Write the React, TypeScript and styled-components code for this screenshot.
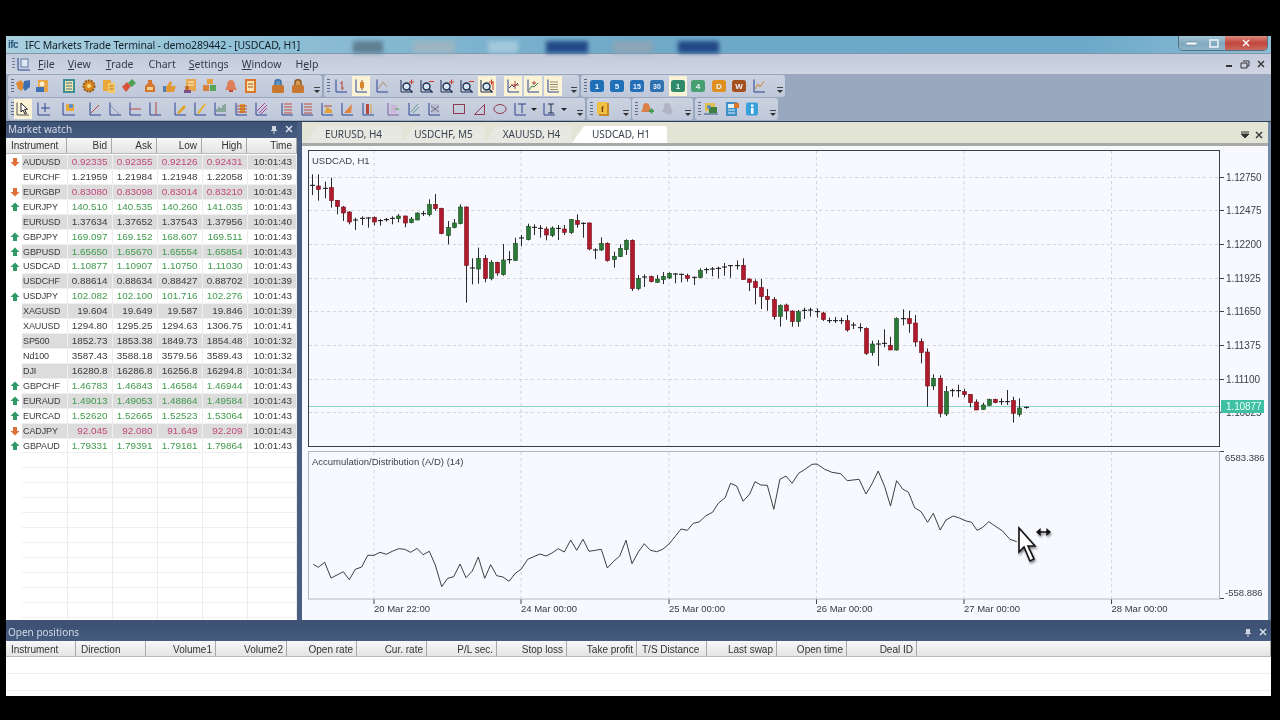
import React, { ReactNode } from "react";
import styled, { createGlobalStyle } from "styled-components";

const GlobalStyle = createGlobalStyle`
  html, body { margin: 0; padding: 0; background: #000; height: 100%; overflow: hidden; }
  * { box-sizing: border-box; }
`;

const FONT = `"Noto Sans", "Liberation Sans", sans-serif`;
const NUM = `"Liberation Sans", Arial, sans-serif`;

const Page = styled.div`
  width: 1280px;
  height: 720px;
  background: #000;
  padding: 36px 9px 24px 6px;
`;

const Win = styled.div`
  position: relative;
  width: 1265px;
  height: 660px;
  display: flex;
  flex-direction: column;
  background: #3f5273;
  font-family: ${FONT};
  font-size: 11px;
  color: #222;
  overflow: hidden;
  filter: blur(0.35px);
`;

/* ---- title bar ---- */
const TitleBar = styled.div`
  height: 18px;
  display: flex;
  align-items: center;
  flex: none;
  padding-left: 2px;
  background: linear-gradient(90deg, #a9cfdf 0%, #8fc0d6 20%, #6ea9c8 50%, #6ba8c9 85%, #8fbfd5 100%);
  border-bottom: 1px solid #7f97a8;
`;
const Logo = styled.span`
  width: 15px;
  color: #27577a;
  font: bold 10px ${NUM};
  letter-spacing: -0.5px;
`;
const TitleText = styled.span`
  margin-left: 2px;
  width: 320px;
  white-space: nowrap;
  font-size: 10.5px;
  letter-spacing: -0.18px;
  color: #15202a;
`;
const Blob = styled.span<{ $w: number; $gap: number; $c: string }>`
  width: ${(p) => p.$w}px;
  height: 12px;
  margin-left: ${(p) => p.$gap}px;
  margin-top: 5px;
  background: ${(p) => p.$c};
  filter: blur(2px);
`;
const WinButtons = styled.div`
  display: flex;
  margin-left: auto;
  margin-right: 3px;
  align-self: flex-start;
  width: 90px;
  height: 15px;
  border: 1px solid #55707f;
  border-top: none;
  border-radius: 0 0 5px 5px;
  overflow: hidden;
`;
const WinBtn = styled.span<{ $w: number; $red?: boolean }>`
  width: ${(p) => p.$w}px;
  display: flex;
  align-items: center;
  justify-content: center;
  background: ${(p) =>
    p.$red ? "linear-gradient(#d98a80, #c2453c 50%, #c96a60)" : "linear-gradient(#a4c4d4, #7fa9c0 55%, #8fb4c8)"};
`;

/* ---- menu ---- */
const MenuBar = styled.div`
  height: 20px;
  flex: none;
  display: flex;
  align-items: center;
  background: linear-gradient(#c2cadb, #cfd5e2);
  padding-left: 6px;
`;
const MenuGrip = styled.span`
  width: 3px;
  height: 12px;
  background: repeating-linear-gradient(#6f7f9a 0 1px, transparent 1px 3px);
`;
const MenuIcon = styled.svg`
  margin-left: 2px;
`;
const MenuItem = styled.span<{ $x: number }>`
  margin-left: ${(p) => p.$x}px;
  font-size: 10.5px;
  color: #333c4c;
  white-space: nowrap;
  u { text-decoration-thickness: 1px; }
`;
const MdiButtons = styled.div`
  margin-left: auto;
  display: flex;
  gap: 7px;
  padding-right: 6px;
  align-items: center;
`;

/* ---- toolbars ---- */
const Toolbars = styled.div`
  height: 48px;
  flex: none;
  background: #9aa8bf;
  border-bottom: 1px solid #2c3b52;
  padding-top: 1px;
  display: flex;
  flex-direction: column;
  gap: 1px;
`;
const ToolRow = styled.div`
  height: 22px;
  display: flex;
  padding-left: 2px;
`;
const ToolGroup = styled.div<{ $w: number; $gap: number }>`
  width: ${(p) => p.$w}px;
  margin-left: ${(p) => p.$gap}px;
  height: 22px;
  display: flex;
  align-items: center;
  padding-left: 3px;
  background: linear-gradient(#cbd2e0, #bfc8da);
  border-radius: 3px;
`;
const ToolGrip = styled.span`
  flex: none;
  width: 3px;
  height: 14px;
  background: repeating-linear-gradient(#5d6c88 0 1px, transparent 1px 3px);
`;
const ToolSlot = styled.span<{ $gap: number; $on?: boolean }>`
  flex: none;
  width: 18px;
  height: 20px;
  margin-left: ${(p) => p.$gap}px;
  display: flex;
  align-items: center;
  justify-content: center;
  background: ${(p) => (p.$on ? "#faf3d6" : "transparent")};
`;
const Chevron = styled.span`
  margin-left: auto;
  margin-right: 2px;
  margin-top: 8px;
  width: 6px;
  height: 7px;
  border-top: 1px solid #444;
  position: relative;
  &::after {
    content: "";
    position: absolute;
    left: 0;
    top: 2px;
    border-left: 3px solid transparent;
    border-right: 3px solid transparent;
    border-top: 3px solid #333;
  }
`;
const DropArrow = styled.span<{ $gap: number }>`
  flex: none;
  margin-left: ${(p) => p.$gap}px;
  border-left: 3px solid transparent;
  border-right: 3px solid transparent;
  border-top: 3px solid #222;
`;

/* ---- main ---- */
const Main = styled.div`
  height: 498px;
  flex: none;
  display: flex;
  gap: 5px;
  background: #4a5e82;
`;
const LeftPanel = styled.div`
  width: 291px;
  flex: none;
  display: flex;
  flex-direction: column;
  overflow: hidden;
`;
const PanelHeader = styled.div`
  height: 16px;
  flex: none;
  display: flex;
  align-items: center;
  padding: 0 4px 2px 2px;
  background: linear-gradient(#3c5174, #465c80);
  color: #d3dae6;
  font-size: 10px;
`;
const HeaderIcons = styled.span`
  margin-left: auto;
  display: flex;
  align-items: center;
  gap: 7px;
`;
const HeadRow = styled.div<{ $cols: string }>`
  height: 16px;
  flex: none;
  display: grid;
  grid-template-columns: ${(p) => p.$cols};
  background: linear-gradient(#f7f7f7, #e4e4e4);
  border-bottom: 1px solid #b9b9b9;
`;
const HeadCell = styled.div<{ $right?: boolean }>`
  border-right: 1px solid #a8a8a8;
  padding: 0 4px 0 5px;
  text-align: ${(p) => (p.$right ? "right" : "left")};
  font: 10px/15px ${NUM};
  color: #333;
  white-space: nowrap;
  overflow: hidden;
`;
const PosHeadCell = styled(HeadCell)`
  padding-right: 3px;
  line-height: 17px;
`;
const WatchBody = styled.div`
  flex: 1;
  padding-top: 1px;
  background: #fff;
  overflow: hidden;
`;
const WatchRow = styled.div`
  height: 14.93px;
  display: grid;
  grid-template-columns: 16px 45.5px 45px 45px 45px 45px 49.5px;
`;
const ArrowCell = styled.div`
  background: #fff;
  display: flex;
  align-items: center;
  justify-content: center;
  padding-left: 1px;
`;
const Cell = styled.div<{ $tone: string; $zebra: boolean; $right?: boolean }>`
  background: ${(p) => (p.$zebra ? "#dcdcdc" : "#fff")};
  border-right: 1px solid ${(p) => (p.$zebra ? "#efefef" : "#ececec")};
  border-bottom: 1px solid #f0f0f0;
  color: ${(p) => p.$tone};
  font: 9.9px/14px ${NUM};
  text-align: ${(p) => (p.$right ? "right" : "left")};
  padding: 0 ${(p) => (p.$right ? 4 : 0)}px 0 ${(p) => (p.$right ? 0 : 1)}px;
  white-space: nowrap;
  overflow: hidden;
`;
const NameCell = styled(Cell)`
  letter-spacing: -0.1px;
  font-size: 9px;
`;

const RightPanel = styled.div`
  flex: 1;
  display: flex;
  flex-direction: column;
  background: #f7f9ff;
  overflow: hidden;
  border-right: 3px solid #7488a8;
`;
const TabStrip = styled.div`
  height: 24px;
  flex: none;
  display: flex;
  align-items: flex-start;
  padding: 4px 5px 0 3px;
  background: #e2e5d6;
  border-bottom: 3px solid #a9a9a9;
`;
const Tab = styled.div<{ $w: number; $shift?: number; $on?: boolean }>`
  width: ${(p) => p.$w}px;
  height: 17px;
  padding-left: ${(p) => p.$shift ?? 0}px;
  text-align: center;
  font-size: 10px;
  line-height: 16px;
  color: #3a4250;
  background: ${(p) => (p.$on ? "#fff" : "#e8e8e2")};
  clip-path: polygon(12px 0, calc(100% - 1px) 0, 100% 3px, 100% 100%, 0 100%);
  white-space: nowrap;
`;
const StripIcons = styled(HeaderIcons)`
  align-self: center;
  gap: 6px;
`;
const ChartBox = styled.div`
  flex: 1;
  position: relative;
`;
const ChartSvg = styled.svg`
  display: block;
`;
const CursorSvg = styled.svg`
  position: absolute;
  left: 714px;
  top: 380px;
  filter: drop-shadow(1px 2px 1px rgba(0, 0, 0, 0.45));
`;

/* ---- positions ---- */
const BottomPanel = styled.div`
  margin-top: 5px;
  flex: 1;
  display: flex;
  flex-direction: column;
  background: #fff;
  overflow: hidden;
`;
const PosBody = styled.div`
  flex: 1;
  background: repeating-linear-gradient(#fff 0 16px, #efefef 16px 17px);
`;

/* ---- icons ---- */
const navy = "#2c4290";
const rust = "#b5473f";
const shapeRed = "#8f3a50";
const axes = <path d="M3 1.5v12.5h11" stroke={navy} fill="none" />;
const ln = (d: string, c = navy) => <path d={d} stroke={c} fill="none" />;
const box = (x: number, y: number, w: number, h: number, c: string) => <rect x={x} y={y} width={w} height={h} fill={c} />;
const tf = (label: string, c: string, size = 8) => (
  <>
    <rect x="1" y="2" width="14" height="12" rx="2.5" fill={c} />
    <text x="8" y="11" textAnchor="middle" fontSize={size} fontWeight="700" fontFamily="Liberation Sans" fill="#e8f2ff">
      {label}
    </text>
  </>
);
const loupe = (sign: string) => (
  <>
    {ln("M2 2v12h12", "#1f2f50")}
    <circle cx="7.5" cy="8.5" r="3.5" fill="#d8e4f2" stroke="#1d3252" strokeWidth="1.4" />
    <path d="M10 11l3 3" stroke="#1d3252" strokeWidth="1.6" />
    {sign === "+" ? ln("M10 4h5M12.5 1.5v5", "#c8372d") : ln("M10 3.5h5", "#c8372d")}
  </>
);

const ICONS: Record<string, ReactNode> = {
  shake: (
    <>
      <path d="M1 5l5-3 3 4-2 7-4-2z" fill="#e08a38" />
      <path d="M9 3l6-1v7l-5 4-2-3z" fill="#3f6fb0" />
    </>
  ),
  user: (
    <>
      {box(3, 2, 10, 12, "#e9a54a")}
      <circle cx="7" cy="6" r="2.5" fill="#fff0d0" />
      {box(1, 9, 8, 5, "#3d74b8")}
    </>
  ),
  list: (
    <>
      {box(2, 1, 12, 14, "#3d8f96")}
      {box(4, 3, 8, 10, "#f2e6a8")}
      {ln("M5 5h6M5 8h6M5 11h6", "#3d6f86")}
    </>
  ),
  gear: (
    <>
      <circle cx="8" cy="8" r="5.5" fill="#d98a20" stroke="#9a5a12" strokeDasharray="2 1" strokeWidth="2" />
      <circle cx="8" cy="8" r="2" fill="#f6d880" />
    </>
  ),
  docs: (
    <>
      {box(2, 2, 8, 11, "#e8a83a")}
      {box(7, 5, 7, 10, "#f4c860")}
      {ln("M8.5 8h4M8.5 11h4", "#b5702a")}
    </>
  ),
  swap: (
    <>
      <path d="M1 9l5-5 4 4-5 6z" fill="#d8553c" />
      <path d="M7 5l4-4 4 4-4 4z" fill="#4f9f55" />
    </>
  ),
  bottle: (
    <>
      <path d="M6 2h4v3l3 3v6H3V8l3-3z" fill="#d6762e" />
      {box(5, 9, 6, 3, "#f3cf90")}
    </>
  ),
  thumb: (
    <>
      <path d="M2 8h3l3-5 2 1-1 4h5l-2 6H5l-3-1z" fill="#e29a38" />
      {box(1, 8, 3, 6, "#4f7fb5")}
    </>
  ),
  docuser: (
    <>
      {box(4, 1, 10, 12, "#e6a84a")}
      {ln("M6 4h6M6 7h6", "#fff2d0")}
      <circle cx="5" cy="10" r="2.2" fill="#c66a2a" />
      {box(2, 12, 7, 3, "#7a4f8a")}
    </>
  ),
  boxes: (
    <>
      {box(5, 1, 6, 5, "#e4a03c")}
      {box(1, 7, 6, 6, "#d9823a")}
      {box(8, 7, 6, 6, "#58a55a")}
    </>
  ),
  bell: (
    <>
      <path d="M8 2c3 0 4 3 4 6l2 4H2l2-4c0-3 1-6 4-6z" fill="#de7f5a" />
      {box(6, 12, 4, 2, "#c24a3a")}
    </>
  ),
  page: (
    <>
      {box(2, 1, 11, 14, "#d9772a")}
      {box(4, 3, 7, 10, "#f7e4b0")}
      {ln("M5 6h5M5 9h5", "#a8591f")}
    </>
  ),
  lockb: (
    <>
      <path d="M5 7V4c0-3 6-3 6 0v3" stroke="#3f6f9f" strokeWidth="1.5" fill="#5f94c4" />
      <rect x="2" y="7" width="12" height="8" rx="1.5" fill="#c8782e" />
    </>
  ),
  locko: (
    <>
      <path d="M5 7V4c0-3 6-3 6 0v3" stroke="#8f5722" strokeWidth="1.5" fill="#d49a58" />
      <rect x="2" y="7" width="12" height="8" rx="1.5" fill="#c8782e" />
    </>
  ),
  bar: (
    <>
      {axes}
      {ln("M9 3v9M7 5h2M9 10h2", "#b5473f")}
    </>
  ),
  candle: (
    <>
      {axes}
      {ln("M9 2v10", "#8a4a20")}
      {box(7, 4, 4, 6, "#d9872e")}
    </>
  ),
  line: (
    <>
      {axes}
      {ln("M4 11l5-7 4 5", "#b09070")}
    </>
  ),
  zin: loupe("+"),
  zout: loupe("-"),
  zfit: (
    <>
      {loupe("+")}
      {ln("M14 4v8", "#c8372d")}
    </>
  ),
  cross: (
    <>
      {axes}
      {ln("M4 10l3-3 2 2 4-4", navy)}
      {ln("M10 3v8M6 7h8", "#b5473f")}
    </>
  ),
  star: (
    <>
      {axes}
      {ln("M4 12l3-4 2 1 4-4", "#2f7f5f")}
      {ln("M9 3v4M7 5h4", "#b5473f")}
    </>
  ),
  grid: (
    <>
      {axes}
      {ln("M5 4h8M5 6.5h8M5 9h8M5 11.5h8", "#9a8f70")}
    </>
  ),
  t1: tf("1", "#2070b8"),
  t5: tf("5", "#2070b8"),
  t15: tf("15", "#2470b8", 7),
  t30: tf("30", "#2f72b0", 7),
  h1: tf("1", "#2e8a68"),
  h4: tf("4", "#46a070"),
  d1: tf("D", "#e09020", 8),
  w1: tf("W", "#a5501c", 8),
  ind: (
    <>
      {ln("M3 1.5v12.5h11", navy)}
      {ln("M4 11l3-5 2 3 4-6", "#d0853a")}
    </>
  ),
  cursor: (
    <>
      {ln("M2 1.5v12.5h12", "#555")}
      <path d="M6 2v9l2-2 2 4 1.5-.7-2-4h3z" fill="#fff" stroke="#222" />
    </>
  ),
  xhair: ln("M2 1.5v12.5h12M9 2v9M5 7h9"),
  pic: (
    <>
      {ln("M2 1.5v12.5h12", navy)}
      {box(5, 3, 8, 7, "#e8a83a")}
      <circle cx="10" cy="5" r="2.2" fill="#5b8fd0" />
    </>
  ),
  l1: (
    <>
      {axes}
      {ln("M4 12l8-8", rust)}
    </>
  ),
  l2: (
    <>
      {axes}
      {ln("M4 5l8 8", "#8d93c0")}
    </>
  ),
  l3: (
    <>
      {axes}
      {ln("M3 8h11", rust)}
    </>
  ),
  l4: (
    <>
      {axes}
      {ln("M9 1v13", rust)}
    </>
  ),
  pen: (
    <>
      {axes}
      <path d="M5 12l7-8 2 2-7 7z" fill="#e0a020" />
    </>
  ),
  pen2: (
    <>
      {axes}
      <path d="M5 12l8-10 1 1-7 10z" fill="#e6b030" />
    </>
  ),
  hist: (
    <>
      {axes}
      {ln("M5 11V8M7 11V6M9 11V7M11 11V4M13 11V3", "#4f7f5a")}
    </>
  ),
  fan: (
    <>
      {ln("M3 2v12h11", navy)}
      {box(7, 3, 5, 9, "#e0a02f")}
      {ln("M4 5h10M4 8h10M4 11h10", "#b5473f")}
    </>
  ),
  chan: (
    <>
      {axes}
      {ln("M4 10l8-8M6 12l8-8M8 13l6-6", "#a5459a")}
    </>
  ),
  lev: (
    <>
      {ln("M3 2v12h11", navy)}
      {ln("M5 3h8M5 6h8M5 9h8M5 12h8", "#c0503f")}
    </>
  ),
  fib: (
    <>
      {ln("M3 2v12h11", navy)}
      <path d="M5 12l3-6 5 3v3z" fill="#e2a23a" />
      {ln("M5 5h8", "#b5473f")}
    </>
  ),
  fib2: (
    <>
      {ln("M3 2v12h11", navy)}
      <path d="M5 12l8-9-1 9z" fill="#e0823a" />
    </>
  ),
  col: (
    <>
      {ln("M3 2v12h11", navy)}
      {box(6, 3, 3, 10, "#b5473f")}
      {ln("M11 3v10", "#d09a40")}
    </>
  ),
  fplus: (
    <>
      {ln("M3 2v12h11", "#8a5ca0")}
      {box(6, 4, 6, 8, "#c9b6d8")}
      {ln("M10 8h4", "#4f9f55")}
    </>
  ),
  fline: (
    <>
      {ln("M3 2v12h11", navy)}
      {ln("M5 11l7-8M7 12l6-6", "#5f9f8a")}
    </>
  ),
  fgrid: (
    <>
      {ln("M3 2v12h11", navy)}
      {box(5, 3, 8, 9, "#b9bdd0")}
      {ln("M5 5l8 6M13 5l-8 6", "#6a6f8a")}
    </>
  ),
  rect: <rect x="2.5" y="3.5" width="11" height="9" stroke={shapeRed} fill="none" />,
  tri: <path d="M2.5 13.5l10-10v10z" stroke={shapeRed} fill="none" />,
  ell: <ellipse cx="8" cy="8" rx="6" ry="4.5" stroke={shapeRed} fill="none" />,
  text1: (
    <>
      {ln("M3 2v12h11", navy)}
      {ln("M6 3h8M10 3v9")}
    </>
  ),
  text2: (
    <>
      {ln("M3 2v12h11", navy)}
      {ln("M7 3h6M7 12h6M10 3v9", "#1f2f50")}
    </>
  ),
  func: (
    <>
      {box(4, 2, 10, 13, "#c8892a")}
      {box(2, 1, 10, 12, "#f0c040")}
      <text x="6" y="11" fontSize="9" fontWeight="700" fontFamily="Liberation Serif" fill="#7a3f10">
        f
      </text>
    </>
  ),
  bellp: (
    <>
      <path d="M7 2c3 0 4 3 4 5l2 4H2l2-4c0-2 0-5 3-5z" fill="#d97f4a" />
      {box(10, 9, 5, 2, "#3f9a4f")}
      {box(11.5, 7.5, 2, 5, "#3f9a4f")}
    </>
  ),
  bellg: <path d="M7 2c3 0 4 3 4 5l2 4-3 3-8-3 2-4c0-2 0-5 3-5z" fill="#aeb4c4" />,
  chat: (
    <>
      {box(2, 2, 10, 8, "#e0c050")}
      {box(6, 6, 8, 7, "#3f7f3f")}
      <circle cx="6" cy="6" r="2" fill="#5f85c0" />
      {box(1, 12, 14, 2, "#7a8fa8")}
    </>
  ),
  note: (
    <>
      {box(2, 1, 11, 14, "#3f8fc8")}
      {box(4, 3, 7, 4, "#e0f0f8")}
      {ln("M4 9h7M4 12h7", "#e0f0f8")}
      {box(10, 2, 5, 5, "#d9772a")}
    </>
  ),
  info: (
    <>
      <rect x="2" y="1.5" width="12" height="13" rx="2" fill="#3aa0dc" />
      <rect x="7" y="3.5" width="2.5" height="2.2" fill="#fff" />
      <rect x="7" y="6.8" width="2.5" height="6" fill="#fff" />
    </>
  ),
};

type Tool = { i?: string; c: number; on?: boolean; drop?: boolean };
type Group = { x: number; end: number; tools: Tool[] };

const mk = (s: string): Tool[] =>
  s.split(" ").map((t) => {
    const [i, c, f] = t.split(":");
    return { i, c: +c, on: f === "on", drop: i === "drop" };
  });

const ROW1: Group[] = [
  { x: 8, end: 322, tools: mk("shake:23 user:43 list:69 gear:89 docs:109 swap:129 bottle:150 thumb:170 docuser:190 boxes:210 bell:231 page:251 lockb:278 locko:298") },
  { x: 324, end: 579, tools: mk("bar:341 candle:361:on line:382 zin:407 zout:427 zin:447 zout:467 zfit:487:on cross:513:on star:533:on grid:553:on") },
  { x: 581, end: 785, tools: mk("t1:597 t5:617 t15:637 t30:657 h1:678:on h4:698 d1:719 w1:739 ind:759") },
];
const ROW2: Group[] = [
  { x: 8, end: 585, tools: mk("cursor:23:on xhair:44 pic:69 l1:95 l2:115 l3:135 l4:155 pen:180 pen2:200 hist:220 fan:241 chan:261 lev:287 lev:307 fib:327 fib2:347 col:368 fplus:393 fline:414 fgrid:434 rect:459 tri:480 ell:500 text1:520 drop:534 text2:549 drop:564") },
  { x: 587, end: 631, tools: mk("func:603") },
  { x: 632, end: 693, tools: mk("bellp:647 bellg:668") },
  { x: 695, end: 778, tools: mk("chat:711 note:732 info:752") },
];

const ToolbarRow = ({ groups }: { groups: Group[] }) => {
  return (
    <ToolRow>
      {groups.map((g, gi) => {
        let prev = g.x + 6 - 9; // right edge of the grip, as a centre
        return (
          <ToolGroup key={gi} $w={g.end - g.x} $gap={gi === 0 ? 0 : g.x - groups[gi - 1].end}>
            <ToolGrip />
            {g.tools.map((t, i) => {
              if (t.drop) {
                const gap = t.c - 3 - (prev + 9);
                prev = t.c - 6;
                return <DropArrow key={i} $gap={gap} />;
              }
              const gap = t.c - 9 - (prev + 9);
              prev = t.c;
              return (
                <ToolSlot key={i} $gap={gap} $on={t.on}>
                  <svg width="16" height="16" viewBox="0 0 16 16">
                    {ICONS[t.i as string]}
                  </svg>
                </ToolSlot>
              );
            })}
            <Chevron />
          </ToolGroup>
        );
      })}
    </ToolRow>
  );
};

/* ---- market data ---- */
type Dir = "u" | "d" | "n";
const QUOTES: [string, Dir, string, string, string, string, string][] = [
  ["AUDUSD", "d", "0.92335", "0.92355", "0.92126", "0.92431", "10:01:43"],
  ["EURCHF", "n", "1.21959", "1.21984", "1.21948", "1.22058", "10:01:39"],
  ["EURGBP", "d", "0.83080", "0.83098", "0.83014", "0.83210", "10:01:43"],
  ["EURJPY", "u", "140.510", "140.535", "140.260", "141.035", "10:01:43"],
  ["EURUSD", "n", "1.37634", "1.37652", "1.37543", "1.37956", "10:01:40"],
  ["GBPJPY", "u", "169.097", "169.152", "168.607", "169.511", "10:01:43"],
  ["GBPUSD", "u", "1.65650", "1.65670", "1.65554", "1.65854", "10:01:43"],
  ["USDCAD", "u", "1.10877", "1.10907", "1.10750", "1.11030", "10:01:43"],
  ["USDCHF", "n", "0.88614", "0.88634", "0.88427", "0.88702", "10:01:39"],
  ["USDJPY", "u", "102.082", "102.100", "101.716", "102.276", "10:01:43"],
  ["XAGUSD", "n", "19.604", "19.649", "19.587", "19.846", "10:01:39"],
  ["XAUUSD", "n", "1294.80", "1295.25", "1294.63", "1306.75", "10:01:41"],
  ["SP500", "n", "1852.73", "1853.38", "1849.73", "1854.48", "10:01:32"],
  ["Nd100", "n", "3587.43", "3588.18", "3579.56", "3589.43", "10:01:32"],
  ["DJI", "n", "16280.8", "16286.8", "16256.8", "16294.8", "10:01:34"],
  ["GBPCHF", "u", "1.46783", "1.46843", "1.46584", "1.46944", "10:01:43"],
  ["EURAUD", "u", "1.49013", "1.49053", "1.48864", "1.49584", "10:01:43"],
  ["EURCAD", "u", "1.52620", "1.52665", "1.52523", "1.53064", "10:01:43"],
  ["CADJPY", "d", "92.045", "92.080", "91.649", "92.209", "10:01:43"],
  ["GBPAUD", "u", "1.79331", "1.79391", "1.79181", "1.79864", "10:01:43"],
];
const TONE: Record<Dir, string> = { u: "#3f9a4e", d: "#c2477c", n: "#3a3a3a" };
const EMPTY_ROWS = Array.from({ length: 12 });

const DirArrow = ({ dir }: { dir: Dir }) =>
  dir === "n" ? null : (
    <svg width="10" height="10" viewBox="0 0 10 10">
      {dir === "u" ? (
        <path d="M5 .5L9.5 5H7v4H3V5H.5z" fill="#2f9a68" />
      ) : (
        <path d="M3 1h4v4h2.5L5 9.5.5 5H3z" fill="#e0703a" />
      )}
    </svg>
  );

/* ---- chart data: values are 3x pixel offsets from a base y ---- */
type C = [number, number, number, number, "g" | "r" | "d"];
const C1: C[] = [
  [88,150,121,121,"d"],[88,167,123,133,"r"],[110,160,130,130,"d"],[98,188,128,167,"r"],[165,208,166,185,"r"],[183,228,186,204,"r"],[198,238,201,231,"r"],[218,255,225,225,"d"],[214,240,220,220,"d"],[216,248,219,219,"d"],
  [214,241,217,231,"r"],[222,242,227,227,"d"],[219,230,224,224,"d"],[214,238,220,220,"d"],[207,232,213,221,"g"],[212,247,213,234,"r"],[216,235,222,233,"g"],[202,226,204,225,"g"],[198,213,206,206,"d"],[163,214,179,209,"g"],
  [147,197,178,191,"r"],[188,268,190,266,"r"],[228,298,247,272,"g"],[222,250,234,248,"g"],[178,238,186,236,"g"],[184,473,186,361,"r"],[340,418,369,369,"d"],[308,416,340,372,"g"],[330,412,340,401,"r"],[345,406,352,401,"g"],
  [350,392,352,384,"r"],[297,392,345,389,"g"],[318,356,344,344,"d"],[278,348,295,346,"g"],[270,304,279,279,"d"],[236,286,244,284,"g"],[238,270,247,247,"d"],[240,278,250,250,"d"],[245,286,252,270,"r"],[244,276,249,271,"g"],
  [240,285,250,250,"d"],[240,270,252,262,"r"],[222,267,224,263,"g"],[208,248,226,238,"r"],[232,278,235,235,"d"],[232,316,234,312,"r"],[310,342,315,315,"d"],[277,318,295,315,"g"],[292,350,295,347,"r"],[320,368,334,344,"g"],
  [298,336,310,335,"g"],[283,330,286,314,"g"],[283,438,286,431,"r"],[390,436,400,431,"g"],
  [388,426,396,396,"d"],[392,412,395,410,"r"],[390,413,402,412,"g"],[381,417,394,404,"g"],[382,402,385,399,"g"],[384,415,387,387,"d"],[386,412,388,388,"d"],[386,410,392,400,"r"],[395,420,397,397,"d"],[370,400,376,398,"g"],
  [368,386,374,374,"d"],[366,394,372,372,"d"],[365,400,370,370,"d"],[354,392,366,366,"d"],[361,398,362,362,"d"],[346,374,362,362,"d"],[340,404,361,404,"r"],[400,438,402,412,"r"],[403,478,410,428,"r"],[402,492,428,455,"r"],
  [432,497,454,464,"r"],[456,524,463,515,"r"],[478,545,482,514,"g"],[476,524,480,498,"r"],[496,545,498,530,"r"],[495,545,500,530,"g"],[488,522,496,496,"d"],[488,515,495,495,"d"],[490,518,500,500,"d"],[500,528,504,524,"r"],
  [518,534,527,527,"d"],[516,534,527,527,"d"],[518,537,527,527,"d"],[510,560,527,555,"r"],[532,552,540,540,"d"],
];
const C2: C[] = [
  [100,125,113,113,"d"],[112,195,115,190,"r"],[152,197,162,188,"g"],[150,228,162,162,"d"],[118,172,160,168,"d"],[140,180,166,180,"r"],[82,182,86,180,"g"],[58,106,86,86,"d"],[62,128,86,101,"r"],[75,170,99,156,"r"],
  [145,220,154,188,"r"],[175,350,186,288,"r"],[253,300,265,288,"g"],[256,382,265,370,"r"],[288,378,305,372,"g"],[296,320,302,302,"d"],[284,322,302,302,"d"],[296,322,305,314,"r"],[312,352,313,338,"r"],[328,360,336,360,"r"],
  [338,360,345,358,"g"],[326,348,328,346,"g"],[326,340,328,338,"r"],[325,345,335,335,"d"],[300,345,335,335,"d"],[320,398,332,370,"r"],[325,380,354,373,"g"],[350,356,352,352,"d"],
];
const STEP = 6.149;
const candleX = (i: number) => 312.33 + i * STEP;

const AD8: [number, number][] = [
  [40,343],[55,352],[74,337],[93,384],[111,375],[130,365],[148,389],[166,358],[185,351],[203,316],[222,316],[240,307],[259,313],[277,304],[296,296],[314,298],[332,307],[351,295],[369,314],[388,304],[406,345],[425,410],[443,385],[461,380],[480,342],[498,383],[517,363],[535,321],[554,385],[572,344],[590,377],[609,381],[627,394],[646,370],[664,357],[683,328],[701,320],[720,312],[738,318],[756,309],[775,296],[793,306],[812,270],[830,301],[849,268],[867,304],[886,301],[904,298],[922,354],[941,334],[959,318],[978,271],[996,341],[1015,306],[1033,281],[1051,301],[1070,305],[1088,298],[1107,282],[1125,260],[1143,237],[1162,241],[1180,220],
];
const AD9: [number, number][] = [
  [50,216],[68,197],[85,187],[100,160],[118,143],[132,100],[148,108],[165,154],[182,132],[196,95],[211,105],[228,106],[245,178],[261,88],[277,78],[293,100],[310,70],[328,57],[345,43],[358,42],[378,58],[397,67],[420,71],[437,92],[468,88],[486,132],[500,105],[518,63],[535,110],[550,168],[566,92],[582,117],[597,127],[613,173],[630,185],[647,217],[662,190],[680,240],[695,210],[714,198],[730,204],[745,212],[762,217],[776,241],[790,233],[807,215],[826,230],[843,243],[862,268],[880,275],
];
const adPoints = [
  ...AD8.map(([x, y]) => `${(300 + x / 3).toFixed(1)},${(450 + y / 3).toFixed(1)}`),
  ...AD9.map(([x, y]) => `${(680 + x / 2.613).toFixed(1)},${(450 + y / 3).toFixed(1)}`),
].join(" ");

const PRICES: [string, number][] = [
  ["1.12750", 177.5], ["1.12475", 210.5], ["1.12200", 244.5], ["1.11925", 278.5],
  ["1.11650", 311.5], ["1.11375", 345.5], ["1.11100", 379.5], ["1.10825", 412.5],
];
const GRID_X = [374, 521, 669, 816.5, 964, 1111.5];
const DATES: [string, number][] = [
  ["20 Mar 22:00", 374], ["24 Mar 00:00", 521], ["25 Mar 00:00", 669],
  ["26 Mar 00:00", 816.5], ["27 Mar 00:00", 964], ["28 Mar 00:00", 1111.5],
];

const Candle = ({ c, i, base }: { c: C; i: number; base: number }) => {
  const x = Math.round(candleX(i)) + 0.5;
  const y = (v: number) => base + v / 3;
  const [hi, lo, top, bot, kind] = c;
  return (
    <g>
      <line x1={x} x2={x} y1={y(hi)} y2={y(lo)} stroke="#2a2a2a" />
      {kind === "d" ? (
        <line x1={x - 2.5} x2={x + 2.5} y1={y(top)} y2={y(top)} stroke="#111" />
      ) : (
        <rect
          x={x - 2}
          y={y(top)}
          width={4}
          height={Math.max(1, (bot - top) / 3)}
          fill={kind === "g" ? "#2c7a38" : "#b01a2c"}
          stroke={kind === "g" ? "#1d4a22" : "#701018"}
          strokeWidth={0.6}
        />
      )}
    </g>
  );
};

const GRID_COLOR = "#d3d5da";

const Chart = () => (
  <ChartSvg width={966} height={474} viewBox="302 146 966 474" fontFamily="Liberation Sans" fontSize="9.5">
    {PRICES.map(([, y]) => (
      <line key={y} x1={309} x2={1219} y1={y} y2={y} stroke={GRID_COLOR} strokeDasharray="3 3" />
    ))}
    {GRID_X.map((x) => (
      <g key={x}>
        <line x1={x} x2={x} y1={151} y2={446} stroke={GRID_COLOR} strokeDasharray="3 3" />
        <line x1={x} x2={x} y1={452} y2={598} stroke={GRID_COLOR} strokeDasharray="3 3" />
        <line x1={x} x2={x} y1={599} y2={604} stroke="#444" />
      </g>
    ))}
    <line x1={308.5} x2={1220} y1={406.5} y2={406.5} stroke="#86d3c2" strokeWidth={1.2} />
    {C1.map((c, i) => (
      <Candle key={i} c={c} i={i} base={145} />
    ))}
    {C2.map((c, i) => (
      <Candle key={i} c={c} i={i + C1.length} base={290} />
    ))}
    <rect x={308.5} y={150.5} width={911} height={296} fill="none" stroke="#3a3f48" />
    <rect x={308.5} y={451.5} width={911} height={147.5} fill="none" stroke="#b4b8bf" />
    <text x={312} y={164} fill="#3a3f48">USDCAD, H1</text>
    <text x={312} y={465} fill="#3a3f48">Accumulation/Distribution (A/D) (14)</text>
    {PRICES.map(([p, y]) => (
      <g key={p}>
        <line x1={1220} x2={1224} y1={y} y2={y} stroke="#444" />
        <text x={1226} y={y + 3.5} fill="#3a3f48" fontSize="10" letterSpacing="-0.1">{p}</text>
      </g>
    ))}
    <rect x={1221} y={400} width={43} height={13} fill="#3fbfa3" />
    <text x={1226} y={410} fill="#eafff8" fontSize="10" letterSpacing="-0.1">1.10877</text>
    <line x1={1220} x2={1224} y1={451.5} y2={451.5} stroke="#444" />
    <line x1={1220} x2={1224} y1={598.5} y2={598.5} stroke="#444" />
    <text x={1225} y={461} fill="#3a3f48">6583.386</text>
    <text x={1225} y={596} fill="#3a3f48">-558.886</text>
    <polyline points={adPoints} fill="none" stroke="#2a2a2a" strokeWidth={0.9} />
    {DATES.map(([d, x]) => (
      <text key={d} x={x} y={612} fill="#333a44">{d}</text>
    ))}
  </ChartSvg>
);

const Pin = () => (
  <svg width="8" height="9" viewBox="0 0 8 9">
    <path d="M2 1h4v4h1v1H4.5v3h-1V6H1V5h1z" fill="#cfd6e4" />
  </svg>
);
const Cross = ({ c = "#dfe5ef" }: { c?: string }) => (
  <svg width="8" height="8" viewBox="0 0 8 8">
    <path d="M1 1l6 6M7 1L1 7" stroke={c} strokeWidth="1.4" />
  </svg>
);

const POS_COLS = "70px 70px 70px 71px 70px 70px 70px 70px 70px 70px 70px 70px 70px 1fr";
const POS_HEAD: [string, boolean][] = [
  ["Instrument", false], ["Direction", false], ["Volume1", true], ["Volume2", true], ["Open rate", true],
  ["Cur. rate", true], ["P/L sec.", true], ["Stop loss", true], ["Take profit", true], ["T/S Distance", false],
  ["Last swap", true], ["Open time", true], ["Deal ID", true], ["", false],
];
const WATCH_HEAD: [string, boolean][] = [
  ["Instrument", false], ["Bid", true], ["Ask", true], ["Low", true], ["High", true], ["Time", true],
];

const MENU: [ReactNode, number][] = [
  [<><u>F</u>ile</>, 7], [<><u>V</u>iew</>, 13], [<><u>T</u>rade</>, 15], ["Chart", 15],
  [<><u>S</u>ettings</>, 13], [<><u>W</u>indow</>, 13], [<>H<u>e</u>lp</>, 14],
];

const App = () => (
  <Page>
    <GlobalStyle />
    <Win>
      <TitleBar>
        <Logo>ifc</Logo>
        <TitleText>IFC Markets Trade Terminal - demo289442 - [USDCAD, H1]</TitleText>
        <Blob $w={30} $gap={8} $c="#5f7f92" />
        <Blob $w={42} $gap={30} $c="#9db5c2" />
        <Blob $w={30} $gap={33} $c="#a3c8da" />
        <Blob $w={42} $gap={28} $c="#234a88" />
        <Blob $w={40} $gap={25} $c="#8aa5b5" />
        <Blob $w={41} $gap={25} $c="#234a88" />
        <WinButtons>
          <WinBtn $w={25}>
            <svg width="11" height="5"><rect y="1" width="11" height="3" fill="#eef4f8" stroke="#55707f" strokeWidth="0.5" /></svg>
          </WinBtn>
          <WinBtn $w={22}>
            <svg width="10" height="9"><rect x="1" y="1" width="8" height="7" fill="none" stroke="#f0f4f8" strokeWidth="1.5" /></svg>
          </WinBtn>
          <WinBtn $w={43} $red>
            <Cross c="#fff" />
          </WinBtn>
        </WinButtons>
      </TitleBar>

      <MenuBar>
        <MenuGrip />
        <MenuIcon width="14" height="14" viewBox="0 0 14 14">
          <path d="M1 1v12h12" stroke="#2c4290" fill="none" />
          <rect x="4" y="2" width="7" height="8" fill="#dfe7f2" stroke="#5f7fa8" />
        </MenuIcon>
        {MENU.map(([label, gap], i) => (
          <MenuItem key={i} $x={gap}>{label}</MenuItem>
        ))}
        <MdiButtons>
          <svg width="8" height="8"><rect x="1" y="5" width="6" height="2" fill="#333" /></svg>
          <svg width="10" height="9"><path d="M3 1h6v5H7M1 3h6v5H1z" fill="none" stroke="#333" /></svg>
          <Cross c="#333" />
        </MdiButtons>
      </MenuBar>

      <Toolbars>
        <ToolbarRow groups={ROW1} />
        <ToolbarRow groups={ROW2} />
      </Toolbars>

      <Main>
        <LeftPanel>
          <PanelHeader>
            Market watch
            <HeaderIcons>
              <Pin />
              <Cross />
            </HeaderIcons>
          </PanelHeader>
          <HeadRow $cols="61px 45px 45px 45px 45px 50px">
            {WATCH_HEAD.map(([h, r]) => (
              <HeadCell key={h} $right={r}>{h}</HeadCell>
            ))}
          </HeadRow>
          <WatchBody>
            {QUOTES.map(([name, dir, bid, ask, low, high, time], i) => {
              const zebra = i % 2 === 0;
              return (
                <WatchRow key={name}>
                  <ArrowCell><DirArrow dir={dir} /></ArrowCell>
                  <NameCell $tone="#3a3a3a" $zebra={zebra}>{name}</NameCell>
                  {[bid, ask, low, high].map((v, j) => (
                    <Cell key={j} $tone={TONE[dir]} $zebra={zebra} $right>{v}</Cell>
                  ))}
                  <Cell $tone="#3a3a3a" $zebra={zebra} $right>{time}</Cell>
                </WatchRow>
              );
            })}
            {EMPTY_ROWS.map((_, i) => (
              <WatchRow key={i}>
                <ArrowCell />
                {[0, 1, 2, 3, 4, 5].map((j) => (
                  <Cell key={j} $tone="#333" $zebra={false} />
                ))}
              </WatchRow>
            ))}
          </WatchBody>
        </LeftPanel>

        <RightPanel>
          <TabStrip>
            <Tab $w={97}>EURUSD, H4</Tab>
            <Tab $w={83}>USDCHF, M5</Tab>
            <Tab $w={87} $shift={6}>XAUUSD, H4</Tab>
            <Tab $w={95} $shift={3} $on>USDCAD, H1</Tab>
            <StripIcons>
              <svg width="8" height="8"><path d="M0 1h8M0 3h8l-4 4z" stroke="#333" fill="#333" /></svg>
              <Cross c="#333" />
            </StripIcons>
          </TabStrip>
          <ChartBox>
            <Chart />
            <CursorSvg width="40" height="40" viewBox="0 0 40 40">
              <path d="M3 2v24l5-5 6 14 4-2-6-13h7z" fill="#fff" stroke="#111" strokeWidth="1.6" />
              <path d="M21 6h13M21 6l3-2.5v5zM34 6l-3-2.5v5z" stroke="#111" strokeWidth="1.3" fill="#111" />
            </CursorSvg>
          </ChartBox>
        </RightPanel>
      </Main>

      <BottomPanel>
        <PanelHeader>
          Open positions
          <HeaderIcons>
            <Pin />
            <Cross />
          </HeaderIcons>
        </PanelHeader>
        <HeadRow $cols={POS_COLS}>
          {POS_HEAD.map(([h, r], i) => (
            <PosHeadCell key={i} $right={r}>{h}</PosHeadCell>
          ))}
        </HeadRow>
        <PosBody />
      </BottomPanel>
    </Win>
  </Page>
);

export default App;
